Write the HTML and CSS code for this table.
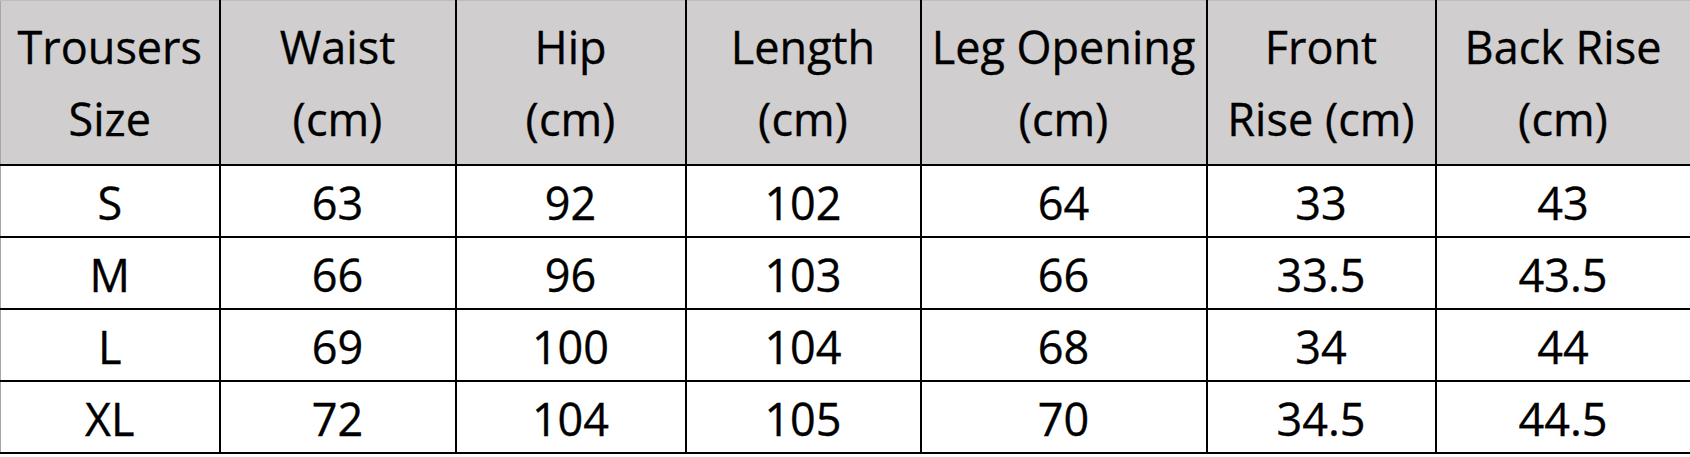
FILE: index.html
```html
<!DOCTYPE html>
<html lang="en">
<head>
<meta charset="utf-8">
<title>Trousers Size Chart</title>
<link rel="stylesheet" href="styles.css">
</head>
<body>
<table class="chart">
  <colgroup>
    <col class="c1"><col class="c2"><col class="c3"><col class="c4"><col class="c5"><col class="c6"><col class="c7">
  </colgroup>
  <thead>
    <tr class="head">
      <th>Trousers<br>Size</th>
      <th>Waist<br>(cm)</th>
      <th>Hip<br>(cm)</th>
      <th>Length<br>(cm)</th>
      <th>Leg Opening<br>(cm)</th>
      <th>Front<br>Rise (cm)</th>
      <th>Back Rise<br>(cm)</th>
    </tr>
  </thead>
  <tbody>
    <tr><td>S</td><td>63</td><td>92</td><td>102</td><td>64</td><td>33</td><td>43</td></tr>
    <tr><td>M</td><td>66</td><td>96</td><td>103</td><td>66</td><td>33.5</td><td>43.5</td></tr>
    <tr><td>L</td><td>69</td><td>100</td><td>104</td><td>68</td><td>34</td><td>44</td></tr>
    <tr><td>XL</td><td>72</td><td>104</td><td>105</td><td>70</td><td>34.5</td><td>44.5</td></tr>
  </tbody>
</table>
</body>
</html>
```
FILE: styles.css
```css
html, body {
  margin: 0;
  padding: 0;
  background: #ffffff;
}
body {
  width: 1690px;
  height: 457px;
  overflow: hidden;
}
.chart {
  border-collapse: collapse;
  table-layout: fixed;
  width: 1690px;
  font-family: "Open Sans", "Noto Sans", sans-serif;
  font-size: 45px;
  color: #000;
  -webkit-text-stroke: 0.35px #000;
}
.c1 { width: 219px; }
.c2 { width: 236px; }
.c3 { width: 230px; }
.c4 { width: 235px; }
.c5 { width: 286px; }
.c6 { width: 229px; }
.c7 { width: 255px; }

.chart th,
.chart td {
  border: 2px solid #000;
  padding: 0;
  text-align: center;
  vertical-align: middle;
  white-space: nowrap;
  font-weight: 400;
}
.chart th {
  background: #d0cece;
  height: 163px;
  line-height: 72px;
  border-top: 1px solid #bdbdbd;
}
.chart td {
  height: 72px;
  line-height: 61px;
  padding-top: 3px;
  box-sizing: border-box;
}
.chart tr > :first-child {
  border-left: 1px solid #a6a6a6;
}
```
